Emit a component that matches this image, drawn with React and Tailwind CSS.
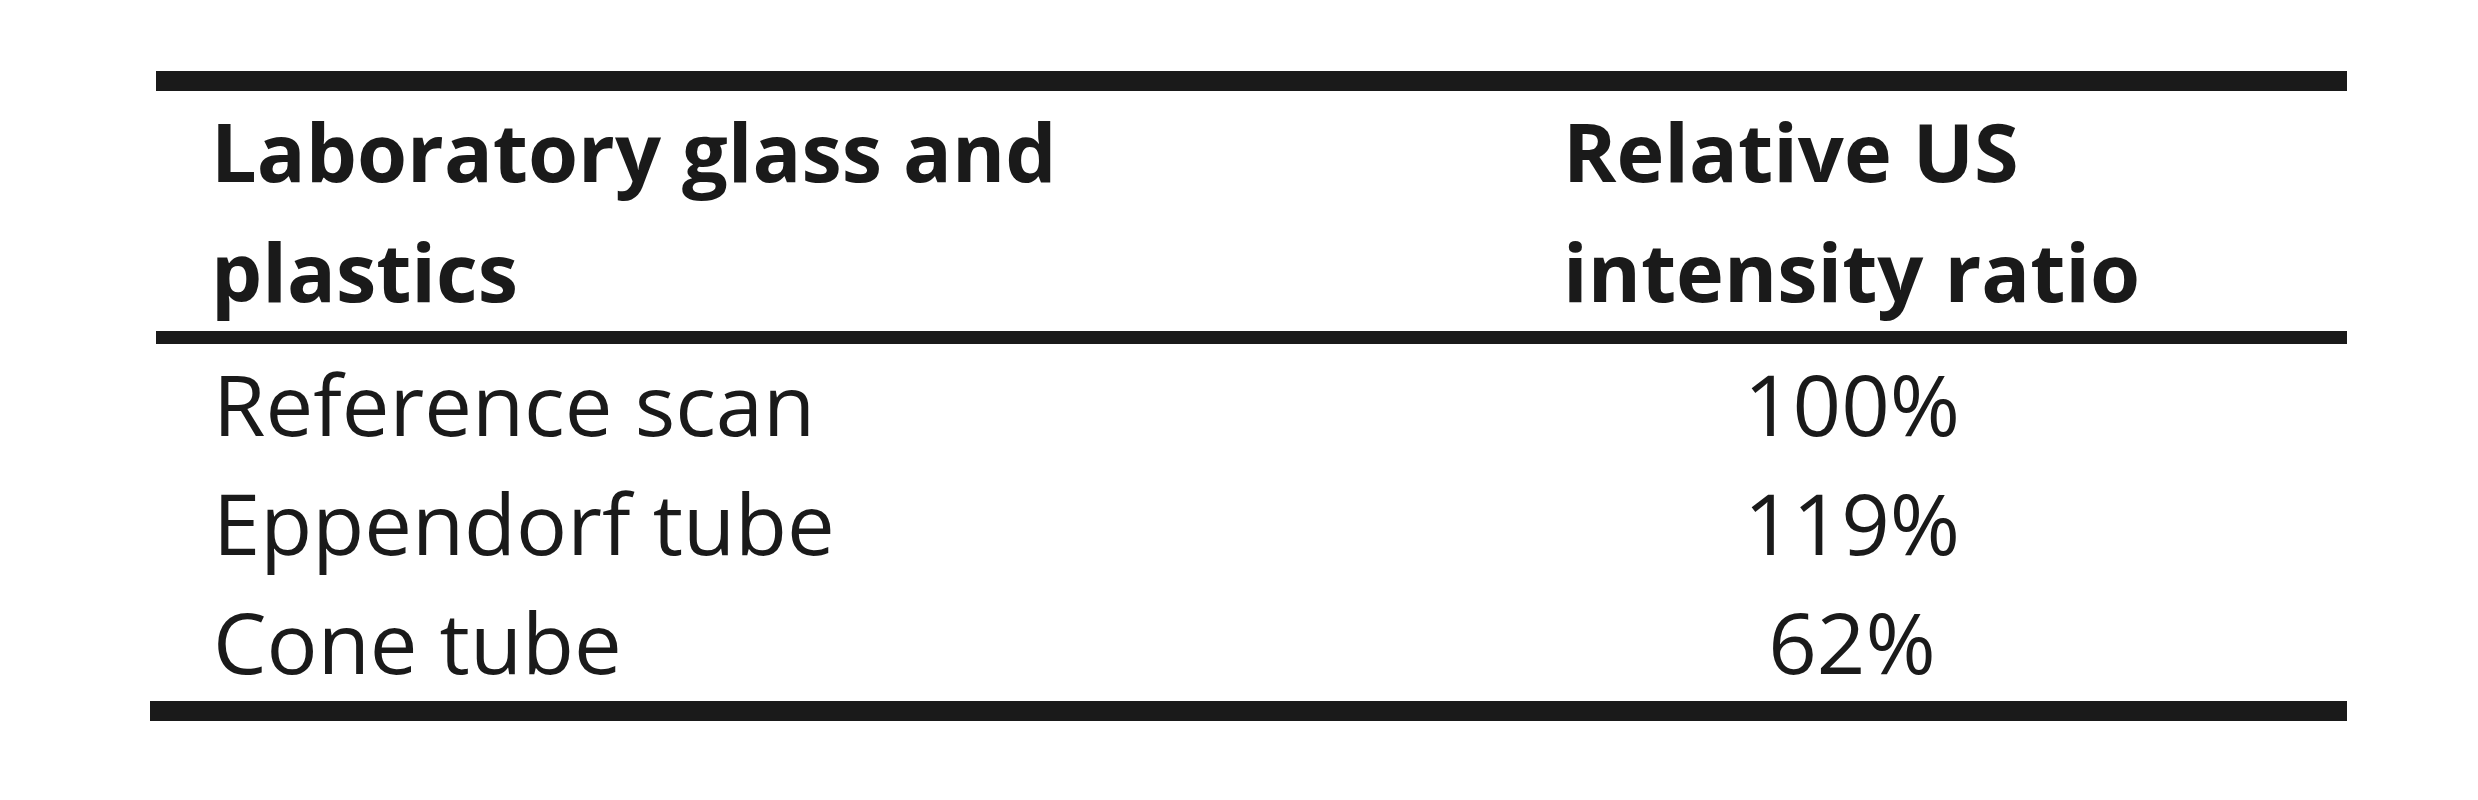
import React from "react";

const rows = [
  ["Reference scan", "100%"],
  ["Eppendorf tube", "119%"],
  ["Cone tube", "62%"],
];

export default function App() {
  return (
    <div className="w-[2478px] h-[800px] bg-white text-[#1a1a1a] font-['Open_Sans',sans-serif] pt-[71px]">
      <div className="ml-[156px] w-[2191px]">
        <div className="border-t-[20px] border-b-[13px] border-[#1a1a1a] grid grid-cols-[1407px_1fr] font-bold text-[81px] leading-[120px]">
          <div className="pl-[55px]">
            <div>Laboratory glass and</div>
            <div>plastics</div>
          </div>
          <div>
            <div>Relative US</div>
            <div>intensity ratio</div>
          </div>
        </div>
        <div className="text-[85px] leading-[119px]">
          {rows.map(([name, val]) => (
            <div key={name} className="grid grid-cols-[1407px_1fr]">
              <div className="pl-[57px]">{name}</div>
              <div className="w-[578px] text-center">{val}</div>
            </div>
          ))}
        </div>
      </div>
      <div className="ml-[150px] w-[2197px] h-[20px] bg-[#1a1a1a]" />
    </div>
  );
}
